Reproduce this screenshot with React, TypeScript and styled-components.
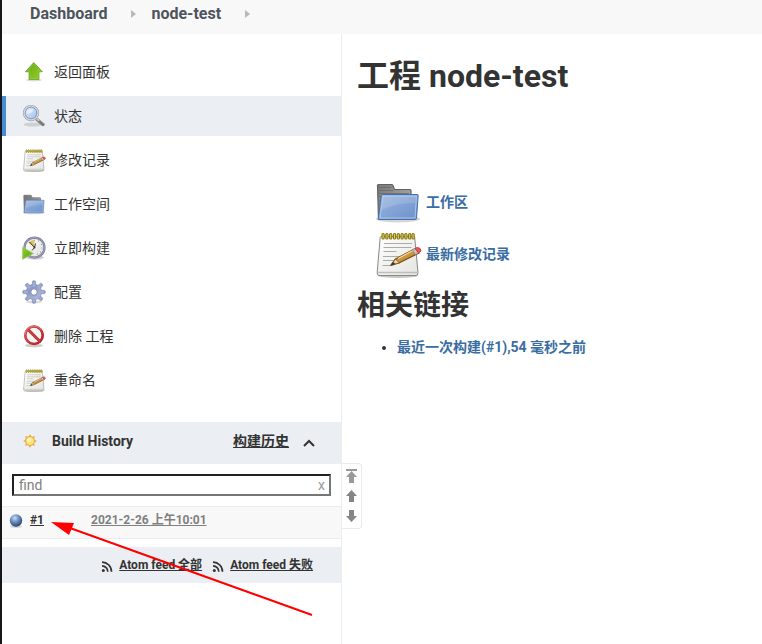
import React, { useId } from "react";
import styled, { createGlobalStyle } from "styled-components";

const GlobalStyle = createGlobalStyle`
  *, *::before, *::after { box-sizing: border-box; }
  html, body { margin: 0; background: #fff; }
  body {
    font-family: Roboto, "Noto Sans CJK SC", sans-serif;
    font-size: 14px;
    line-height: 20px;
    color: #333;
  }
  a { color: inherit; }
`;

const Page = styled.div`
  position: relative;
  min-height: 100vh;
  display: flex;
  flex-direction: column;
  border-left: 2px solid #16161a;
  overflow: hidden;
`;

const EdgeTick = styled.span`
  position: absolute;
  top: 391px;
  left: -2px;
  width: 2px;
  height: 2px;
  background: #77777a;
`;

const Breadcrumbs = styled.nav`
  display: flex;
  align-items: center;
  height: 34px;
  padding: 0 28px 7px;
  background: #f8f8f8;
  font-size: 16px;
  font-weight: 700;
  color: #4d545d;
`;

const Crumb = styled.a`
  text-decoration: none;
`;

const CrumbArrow = styled.svg`
  width: 5px;
  height: 8px;
  margin: 0 15px 0 24px;
  fill: #b8b8b8;
`;

const Body = styled.div`
  flex: 1;
  display: flex;
`;

const Sidebar = styled.aside`
  width: 340px;
  flex: none;
  padding-top: 18px;
  border-right: 1px solid #ebeef1;
`;

const TaskList = styled.nav`
  display: flex;
  flex-direction: column;
  gap: 4px;
  margin-bottom: 22px;
`;

const Task = styled.a<{ $active?: boolean }>`
  display: flex;
  align-items: center;
  gap: 8px;
  height: 40px;
  padding-left: 16px;
  border-left: 4px solid ${(p) => (p.$active ? "#4a8bd6" : "transparent")};
  background: ${(p) => (p.$active ? "#ebeef2" : "transparent")};
  text-decoration: none;
`;

const TaskIcon = styled.svg`
  display: block;
  width: 24px;
  height: 24px;
  flex: none;
`;

const HistoryHeader = styled.header`
  display: flex;
  align-items: center;
  height: 42px;
  padding: 0 24px 4px 20px;
  background: #ebeef2;
  font-weight: 700;
`;

const HistoryTitle = styled.span`
  flex: 1;
  margin-left: 14px;
`;

const UnderlinedLink = styled.a`
  text-decoration: underline;
`;

const CollapseButton = styled.button`
  display: flex;
  margin: 4px 0 0 12px;
  padding: 0;
  border: 0;
  background: none;
  color: #333;
`;

const SearchRow = styled.div`
  display: flex;
  align-items: center;
  height: 22px;
  margin: 10px;
  border: 2px inset #767676;
  background: #fff;
`;

const SearchInput = styled.input`
  flex: 1;
  min-width: 0;
  height: 18px;
  padding: 0 5px;
  border: 0;
  outline: 0;
  background: none;
  font: inherit;
  &::placeholder { color: #808080; }
`;

const ClearButton = styled.button`
  padding: 0 4px;
  border: 0;
  background: none;
  font: inherit;
  line-height: 18px;
  color: #999;
`;

const BuildTable = styled.table`
  width: 100%;
  margin-bottom: 8px;
  border-collapse: collapse;
  font-size: 12px;
  line-height: 16px;
  font-weight: 700;
`;

const BuildRow = styled.tr`
  height: 32px;
  background: #f8f8f8;
  border-top: 1px solid #ebeef0;
  border-bottom: 1px solid #ebeef0;
`;

const BuildCell = styled.td<{ $date?: boolean }>`
  width: ${(p) => (p.$date ? "auto" : "89px")};
  padding: ${(p) => (p.$date ? "0 0 5px" : "0 0 5px 5px")};
  color: ${(p) => (p.$date ? "#808080" : "#333")};
`;

const BuildName = styled.span`
  display: flex;
  align-items: center;
  gap: 5px;
  height: 16px;
`;

const Feeds = styled.footer`
  display: flex;
  align-items: center;
  justify-content: flex-end;
  gap: 10px;
  height: 36px;
  padding-right: 28px;
  background: #ebeef2;
  font-size: 12px;
  line-height: 16px;
  font-weight: 700;
`;

const Feed = styled.span`
  display: flex;
  align-items: center;
  gap: 6px;
  svg { margin-top: 4px; }
`;

const PageNav = styled.div`
  align-self: flex-start;
  display: flex;
  flex-direction: column;
  align-items: center;
  flex: none;
  width: 20px;
  margin-top: 429px;
  padding: 2px 1px 2px 0;
  border: 1px solid #e8ebee;
  border-left: 0;
  border-radius: 0 4px 4px 0;
`;

const PageNavButton = styled.button`
  display: flex;
  align-items: center;
  justify-content: center;
  width: 18px;
  height: 20px;
  padding: 0;
  border: 0;
  background: none;
  color: #858585;
`;

const Main = styled.main`
  flex: 1;
  min-width: 0;
  padding: 22px 16px 0 0;
  margin-left: -5px;
`;

const Title = styled.h1`
  margin: 0 0 82px;
  font-size: 32px;
  line-height: 40px;
`;

const Shortcuts = styled.div`
  display: flex;
  flex-direction: column;
  gap: 4px;
  margin: 0 0 10px 17px;
`;

const Shortcut = styled.a`
  display: flex;
  align-items: center;
  gap: 4px;
  height: 48px;
  font-weight: 700;
  color: #3a6da1;
  text-decoration: none;
`;

const ShortcutIcon = styled.svg`
  display: block;
  width: 48px;
  height: 48px;
`;

const Subtitle = styled.h2`
  margin: 0 0 13px;
  font-size: 28px;
  line-height: 36px;
`;

const LinkList = styled.ul`
  margin: 0;
  padding-left: 40px;
  font-weight: 700;
  a { color: #3a6da1; text-decoration: none; }
`;

const Annotation = styled.svg`
  position: absolute;
  top: 515px;
  left: 48px;
  width: 268px;
  height: 106px;
  pointer-events: none;
`;

type Kind = "up" | "search" | "notepad" | "folder" | "clock" | "gear" | "delete";

function Art({ kind }: { kind: Kind }) {
  const id = useId();
  const g = `url(#${id})`;
  const h = `url(#${id}b)`;
  const grad = (a: string, b: string, suffix = "") => (
    <linearGradient id={id + suffix} x1="0" y1="0" x2="1" y2="1">
      <stop stopColor={a} />
      <stop offset="1" stopColor={b} />
    </linearGradient>
  );
  switch (kind) {
    case "up":
      return (
        <>
          <defs>{grad("#69a51b", "#8fd321")}</defs>
          <ellipse cx="24" cy="40" rx="16" ry="3" fill="#000" opacity=".14" />
          <path d="M23.500 5 41 23.500H34V39H14V23.500H7Z" fill={g} stroke="#6a9f2c" strokeWidth="1.500" />
          <path d="M23.500 8 37 22H32V37H16V22H11Z" fill="none" stroke="#a9dc59" strokeWidth="1.200" opacity=".5" />
        </>
      );
    case "search":
      return (
        <>
          <defs>{grad("#e2ecfa", "#a3c1e8")}</defs>
          <ellipse cx="22" cy="41" rx="19" ry="4" fill="#000" opacity=".12" />
          <path d="m30 31 12 10" stroke="#858583" strokeWidth="7" strokeLinecap="round" />
          <path d="m30 30 12 10" stroke="#c8c8c6" strokeWidth="3.500" strokeLinecap="round" />
          <path d="m35 35 7 6" stroke="#777" strokeWidth="4" strokeLinecap="round" />
          <circle cx="18" cy="18" r="14.500" fill={g} stroke="#9a9c9a" strokeWidth="3.500" />
          <circle cx="18" cy="18" r="14" fill="none" stroke="#e8e8e8" strokeWidth="2" />
          <circle cx="18" cy="18" r="11.500" fill={g} stroke="#6d8fc8" strokeWidth="1.500" />
          <path d="M9 19c0-7 7-10 14-8-1 5-7 9-14 8Z" fill="#fff" opacity=".5" />
        </>
      );
    case "notepad":
      return (
        <>
          <defs>{grad("#ffffff", "#e4e4e1")}{grad("#e9b95e", "#a87020", "b")}</defs>
          <ellipse cx="24" cy="45.500" rx="20" ry="2.500" fill="#000" opacity=".22" />
          <path d="M7.500 6.500h32q1 0 1.200 1l3.300 35q0 3-2 3H5q-2 0-1.800-3l3-35q.1-1 1.300-1Z" fill={g} stroke="#888985" />
          <path d="M4 42.500h39" stroke="#bdbdba" strokeWidth="1.500" />
          <path d="M10 13.500h28M9.500 17.500h28M9.500 21.500h13M9 26.500h23M9 30.500h18M8.500 35.500h11" stroke="#aaaca9" />
          {[9, 12.800, 16.600, 20.400, 24.200, 28, 31.800, 35.600, 39].map((x) => (
            <rect key={x} x={x - 1} y="3.500" width="2.200" height="5.500" rx="1.100" fill="#ead750" stroke="#837313" strokeWidth="1.100" />
          ))}
          <path d="m17 35 4.500-6 19-10 4.500 4-20 10Z" fill={h} stroke="#704a19" strokeWidth="1.100" />
          <path d="m17 35 4.500-6 4 4Z" fill="#efd3a1" stroke="#704a19" strokeWidth=".8" />
          <path d="m16.500 35.500 2.500-3.500 2.500 2Z" fill="#333" />
          <path d="m24 28.500 15-8" stroke="#f8dc9a" strokeWidth="1.200" />
          <path d="m38.500 19.800 2.500-1.300 3.500 4.500-3 1.500Z" fill="#c5c5c5" stroke="#888" strokeWidth=".6" />
          <path d="m41 18.500 2-1q4 0 4 3.500l-2.500 2Z" fill="#ee5757" stroke="#c93636" strokeWidth=".9" />
        </>
      );
    case "folder":
      return (
        <>
          <defs>{grad("#9bb7e0", "#6b90cc")}{grad("#777", "#bbb", "b")}</defs>
          <ellipse cx="24" cy="41" rx="22" ry="3.500" fill="#000" opacity=".16" />
          <path d="M4.500 41.500 3.500 7.500q0-1 1-1h13q1 0 1.500 1l1.500 4H36q1 0 1 1V35" fill={h} stroke="#626260" strokeWidth="1.200" />
          <path d="M5 9.500h12M5 12.500h14M5 15.500h30M5 18.500h30M5 22.500h4M5 26.500h3" stroke="#696968" strokeWidth=".8" />
          <path d="M8.500 16.500h35q.8 0 .7 1l-1.700 23q-.1 1-1 1H5q-.8 0-.7-1l3-23q.1-1 1.200-1Z" fill={g} stroke="#4471ae" />
          <path d="M9 18h33.500L41 40H6Z" fill="none" stroke="#b9cdeb" strokeWidth=".8" />
          <path d="M7.500 32 9 18h33l-.5 7Q24 24 7.500 32Z" fill="#fff" opacity=".14" />
        </>
      );
    case "clock":
      return (
        <>
          <defs>{grad("#ffffff", "#dededc")}{grad("#92d51c", "#4e9e0d", "b")}</defs>
          <ellipse cx="26" cy="43" rx="18" ry="4" fill="#000" opacity=".18" />
          <circle cx="25" cy="23" r="20" fill={g} stroke="#77799a" strokeWidth="4.500" />
          <circle cx="25" cy="23" r="20" fill="none" stroke="#acadc7" strokeWidth="1.600" />
          <path d="m25 23-13-10q6-6 13-5Z" fill="#d9c26c" />
          <path d="M15 12 25 23l-5 6M25 23l2-8" fill="none" stroke="#393939" strokeWidth="2" />
          <circle cx="25" cy="23" r="2" fill="#333" />
          {[[25, 8], [33, 10], [39, 17], [40, 24], [37, 32], [31, 36]].map(([x, y]) => (
            <circle key={`${x}-${y}`} cx={x} cy={y} r="1" fill="#777" />
          ))}
          <path d="m1 22 22 13L1 47Z" fill={h} stroke="#b6c4a5" strokeWidth="1.200" />
          <path d="m2.500 25 17 10-17 9Z" fill="none" stroke="#86c83b" />
        </>
      );
    case "gear":
      return (
        <>
          <defs>{grad("#6f87b7", "#bfc1df")}</defs>
          <ellipse cx="24" cy="44" rx="16" ry="3" fill="#000" opacity=".14" />
          <g fill="#919fc5" stroke="#7583ac">
            {[0, 45, 90, 135, 180, 225, 270, 315].map((a) => (
              <path key={a} d="m20 14 .8-11q.2-1.500 1.700-1.500h3q1.500 0 1.700 1.500l.8 11Z" transform={`rotate(${a} 24 24)`} />
            ))}
          </g>
          <circle cx="24" cy="24" r="15.500" fill={g} stroke="#7f8bb4" />
          {[0, 45, 90, 135, 180, 225, 270, 315].map((a) => (
            <path key={a} d="M21 12h6l-1-8h-4Z" fill="#a1acd0" transform={`rotate(${a} 24 24)`} />
          ))}
          <path d="M12 21q3-9 14-9" fill="none" stroke="#c8d0e8" strokeWidth="1.200" opacity=".7" />
          <circle cx="24" cy="24" r="6.500" fill="#fff" stroke="#7d88ae" strokeWidth="2" />
        </>
      );
    case "delete":
      return (
        <>
          <defs>{grad("#dc6468", "#b9161b")}</defs>
          <ellipse cx="24" cy="43" rx="18" ry="3.500" fill="#000" opacity=".2" />
          <circle cx="24" cy="22.500" r="17.500" fill="#f4f4f4" stroke="#ad3035" strokeWidth="5" />
          <path d="m12 11 24 24" stroke="#ad3035" strokeWidth="6" />
          <circle cx="24" cy="22.500" r="17.500" fill="none" stroke={g} strokeWidth="3.800" />
          <path d="m12 11 24 24" stroke="#cc3d42" strokeWidth="4" />
          <path d="M6 22A18 18 0 0 1 39 12" fill="none" stroke="#ec9c9c" strokeWidth="1.200" />
        </>
      );
  }
}

function SunIcon() {
  return (
    <svg width="16" height="16" viewBox="0 0 16 16" aria-hidden="true">
      <g fill="#edaa48">
        {[0, 45, 90, 135, 180, 225, 270, 315].map((a) => (
          <path key={a} d="m8 1 2 4H6Z" transform={`rotate(${a} 8 8)`} />
        ))}
      </g>
      <circle cx="8" cy="8" r="4.500" fill="#fce67a" stroke="#e7a44a" />
      <circle cx="7" cy="7" r="2" fill="#fff9c5" opacity=".8" />
    </svg>
  );
}

function BallIcon() {
  return (
    <svg width="18" height="16" viewBox="0 0 18 16" aria-hidden="true">
      <defs>
        <radialGradient id="ball" cx=".4" cy=".3" r=".7">
          <stop stopColor="#cadcf2" />
          <stop offset=".45" stopColor="#7092c4" />
          <stop offset="1" stopColor="#28466f" />
        </radialGradient>
      </defs>
      <ellipse cx="9" cy="14.500" rx="6" ry="1.500" opacity=".15" />
      <circle cx="9" cy="8.500" r="6.200" fill="url(#ball)" />
    </svg>
  );
}

function FeedIcon() {
  return (
    <svg width="12" height="12" viewBox="0 0 12 12" fill="none" stroke="#333" strokeWidth="1.700" aria-hidden="true">
      <circle cx="2.300" cy="9.400" r="1.500" fill="#333" stroke="none" />
      <path d="M1 4.800a5.800 5.800 0 0 1 5.800 6M1 1.200a9.400 9.400 0 0 1 9.500 9.600" />
    </svg>
  );
}

const tasks: { label: string; kind: Kind; active?: boolean }[] = [
  { label: "返回面板", kind: "up" },
  { label: "状态", kind: "search", active: true },
  { label: "修改记录", kind: "notepad" },
  { label: "工作空间", kind: "folder" },
  { label: "立即构建", kind: "clock" },
  { label: "配置", kind: "gear" },
  { label: "删除 工程", kind: "delete" },
  { label: "重命名", kind: "notepad" },
];

const shortcuts: { label: string; kind: Kind }[] = [
  { label: "工作区", kind: "folder" },
  { label: "最新修改记录", kind: "notepad" },
];

const crumbs = ["Dashboard", "node-test"];
const feeds = ["Atom feed 全部", "Atom feed 失败"];

const navButtons = [
  { label: "Newest builds", d: "M1 0h11v2H1ZM6.500 2 12 8H9v6H4V8H1Z", color: "#999" },
  { label: "Newer builds", d: "M6.500 1 12 7H9v6H4V7H1Z", color: "#858585" },
  { label: "Older builds", d: "M4 1h5v6h3l-5.500 6L1 7h3Z", color: "#858585" },
];

export default function App() {
  return (
    <Page>
      <GlobalStyle />
      <EdgeTick />
      <Breadcrumbs>
        {crumbs.map((c) => (
          <React.Fragment key={c}>
            <Crumb href="#">{c}</Crumb>
            <CrumbArrow viewBox="0 0 5 8" aria-hidden="true">
              <path d="M0 0 5 4 0 8Z" />
            </CrumbArrow>
          </React.Fragment>
        ))}
      </Breadcrumbs>
      <Body>
        <Sidebar>
          <TaskList>
            {tasks.map((t) => (
              <Task key={t.label} href="#" $active={t.active}>
                <TaskIcon viewBox="0 0 48 48" aria-hidden="true">
                  <Art kind={t.kind} />
                </TaskIcon>
                {t.label}
              </Task>
            ))}
          </TaskList>
          <HistoryHeader>
            <SunIcon />
            <HistoryTitle>Build History</HistoryTitle>
            <UnderlinedLink href="#">构建历史</UnderlinedLink>
            <CollapseButton aria-label="Collapse build history">
              <svg width="16" height="16" viewBox="0 0 16 16" fill="none" stroke="currentColor" strokeWidth="2">
                <path d="m3 11 5-5 5 5" />
              </svg>
            </CollapseButton>
          </HistoryHeader>
          <SearchRow>
            <SearchInput placeholder="find" aria-label="find" />
            <ClearButton aria-label="Clear search">x</ClearButton>
          </SearchRow>
          <BuildTable>
            <tbody>
              <BuildRow>
                <BuildCell>
                  <BuildName>
                    <BallIcon />
                    <UnderlinedLink href="#">#1</UnderlinedLink>
                  </BuildName>
                </BuildCell>
                <BuildCell $date>
                  <UnderlinedLink href="#">2021-2-26 上午10:01</UnderlinedLink>
                </BuildCell>
              </BuildRow>
            </tbody>
          </BuildTable>
          <Feeds>
            {feeds.map((f) => (
              <Feed key={f}>
                <FeedIcon />
                <UnderlinedLink href="#">{f}</UnderlinedLink>
              </Feed>
            ))}
          </Feeds>
        </Sidebar>
        <PageNav>
          {navButtons.map((b) => (
            <PageNavButton key={b.label} aria-label={b.label}>
              <svg width="13" height="14" viewBox="0 0 13 14" fill={b.color}>
                <path d={b.d} />
              </svg>
            </PageNavButton>
          ))}
        </PageNav>
        <Main>
          <Title>工程 node-test</Title>
          <Shortcuts>
            {shortcuts.map((s) => (
              <Shortcut key={s.label} href="#">
                <ShortcutIcon viewBox="0 0 48 48" aria-hidden="true">
                  <Art kind={s.kind} />
                </ShortcutIcon>
                {s.label}
              </Shortcut>
            ))}
          </Shortcuts>
          <Subtitle>相关链接</Subtitle>
          <LinkList>
            <li>
              <a href="#">最近一次构建(#1),54 毫秒之前</a>
            </li>
          </LinkList>
        </Main>
      </Body>
      <Annotation viewBox="0 0 268 106" aria-hidden="true">
        <path d="M20 13 262 100" stroke="#f00" strokeWidth="2" />
        <path d="m1 7 23 1-5 12Z" fill="#f00" />
      </Annotation>
    </Page>
  );
}
